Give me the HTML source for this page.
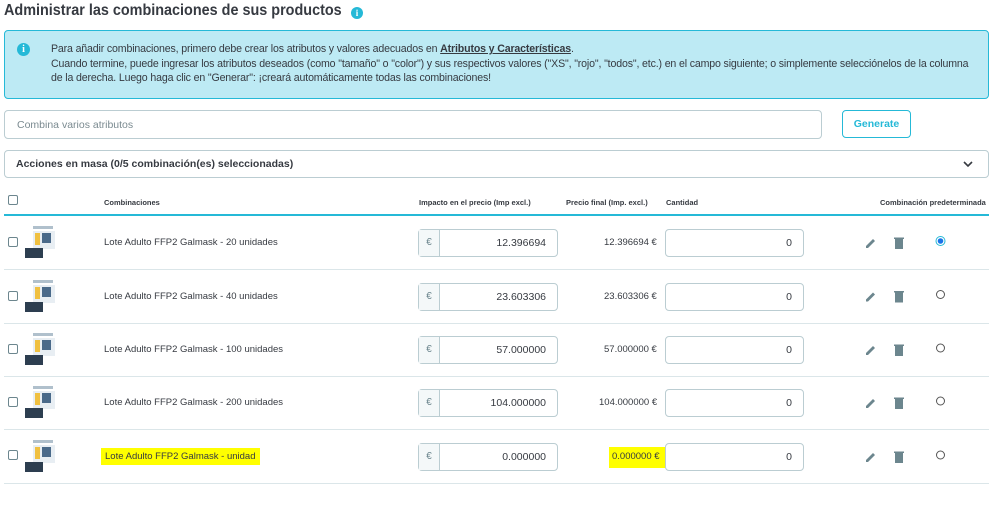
<!DOCTYPE html><html><head><meta charset="utf-8"><style>
*{box-sizing:border-box;margin:0;padding:0}
body{width:1000px;height:521px;background:#fff;font-family:"Liberation Sans",sans-serif;color:#363a41;position:relative;overflow:hidden}
.a{position:absolute}
h2{position:absolute;left:4px;top:2px;font-size:16px;font-weight:bold;color:#363a41;transform:scaleX(0.9);transform-origin:0 0;white-space:nowrap}
.info{left:4px;top:30px;width:985px;height:69px;background:#bdeaf4;border:1px solid #25b9d7;border-radius:4px;font-size:10.6px;line-height:14.5px;color:#363a41;padding:11px 10px 0 46px}
.info div{white-space:nowrap;letter-spacing:-0.15px}
.ic{border-radius:50%;background:#25b9d7;color:#fff;font-weight:bold;text-align:center;font-family:"Liberation Serif",serif}
.inp{border:1px solid #bbcdd2;border-radius:4px;background:#fff}
.th{font-size:7.5px;font-weight:bold;color:#363a41}
.row{position:absolute;left:4px;width:985px;height:54px;border-bottom:1px solid #dbe6e9}
.cb{position:absolute;left:4px;width:10px;height:10px;border:1px solid #6c868e;border-radius:2px;background:#fff}
.t{position:absolute;font-size:9.5px;color:#363a41}
.eur{position:absolute;left:414px;top:13px;width:140px;height:28px;border:1px solid #bbcdd2;border-radius:4px;background:#fff}
.eur span{position:absolute;left:0;top:0;width:21px;height:26px;background:#f4f8f9;border-right:1px solid #bbcdd2;font-size:10px;color:#6c868e;line-height:26px;text-align:center}
.eur b{position:absolute;right:11px;top:0;line-height:26px;font-weight:normal;font-size:10.5px}
.qty{position:absolute;left:661px;top:13px;width:139px;height:28px;border:1px solid #bbcdd2;border-radius:4px;background:#fff;text-align:right;padding-right:11px;line-height:26px;font-size:10.5px}
.img{position:absolute;left:21px;top:8px;width:36px;height:36px}
.hl{background:#ffff00}
</style></head><body>
<h2>Administrar las combinaciones de sus productos</h2>
<div class="a ic" style="left:351px;top:7px;width:12px;height:12px;font-size:9px;line-height:12px">i</div>
<div class="a info"><div>Para añadir combinaciones, primero debe crear los atributos y valores adecuados en <b style="text-decoration:underline">Atributos y Características</b>.</div><div>Cuando termine, puede ingresar los atributos deseados (como "tamaño" o "color") y sus respectivos valores ("XS", "rojo", "todos", etc.) en el campo siguiente; o simplemente selecciónelos de la columna</div><div>de la derecha. Luego haga clic en "Generar": ¡creará automáticamente todas las combinaciones!</div></div>
<div class="a ic" style="left:17px;top:43px;width:13px;height:13px;font-size:10px;line-height:13px">i</div>
<div class="a inp" style="left:4px;top:110px;width:818px;height:29px;font-size:10.5px;color:#7a8a90;padding:8px 12px">Combina varios atributos</div>
<div class="a" style="left:842px;top:110px;width:69px;height:28px;border:1px solid #25b9d7;border-radius:4px;color:#25b9d7;font-weight:bold;font-size:10.5px;text-align:center;line-height:26px">Generate</div>
<div class="a inp" style="left:4px;top:150px;width:985px;height:28px;font-size:10.5px;font-weight:bold;padding:7px 11px;color:#363a41">Acciones en masa (0/5 combinación(es) seleccionadas)</div>
<svg class="a" style="left:962px;top:159px" width="12" height="10"><path d="M2 3l4 4 4-4" stroke="#363a41" stroke-width="1.6" fill="none"/></svg>
<div class="a" style="left:4px;top:192px;width:985px;height:24px;border-bottom:2px solid #25b9d7"></div>
<div class="cb" style="left:8px;top:195px"></div>
<div class="a th" style="left:104px;top:198px">Combinaciones</div>
<div class="a th" style="left:419px;top:198px">Impacto en el precio (Imp excl.)</div>
<div class="a th" style="left:566px;top:198px">Precio final (Imp. excl.)</div>
<div class="a th" style="left:666px;top:198px">Cantidad</div>
<div class="a th" style="left:880px;top:198px">Combinación predeterminada</div>

<div class="row" style="top:216px">
<div class="cb" style="top:21px"></div><div class="img"><svg width="36" height="36"><rect x="8" y="2" width="20" height="3" fill="#b0c0cc"/><rect x="8" y="7" width="22" height="18" fill="#e8eef3"/><rect x="10" y="9" width="5" height="12" fill="#f0c040"/><rect x="17" y="9" width="9" height="10" fill="#4a6a8a"/><rect x="0" y="24" width="18" height="10" fill="#2d3e50"/></svg></div>
<div class="t" style="left:100px;top:21px">Lote Adulto FFP2 Galmask - 20 unidades</div>
<div class="eur"><span>€</span><b>12.396694</b></div>
<div class="t" style="left:600px;top:21px">12.396694 €</div>
<div class="qty">0</div>
</div>
<div class="row" style="top:270px">
<div class="cb" style="top:21px"></div><div class="img"><svg width="36" height="36"><rect x="8" y="2" width="20" height="3" fill="#b0c0cc"/><rect x="8" y="7" width="22" height="18" fill="#e8eef3"/><rect x="10" y="9" width="5" height="12" fill="#f0c040"/><rect x="17" y="9" width="9" height="10" fill="#4a6a8a"/><rect x="0" y="24" width="18" height="10" fill="#2d3e50"/></svg></div>
<div class="t" style="left:100px;top:21px">Lote Adulto FFP2 Galmask - 40 unidades</div>
<div class="eur"><span>€</span><b>23.603306</b></div>
<div class="t" style="left:600px;top:21px">23.603306 €</div>
<div class="qty">0</div>
</div>
<div class="row" style="top:323px">
<div class="cb" style="top:21px"></div><div class="img"><svg width="36" height="36"><rect x="8" y="2" width="20" height="3" fill="#b0c0cc"/><rect x="8" y="7" width="22" height="18" fill="#e8eef3"/><rect x="10" y="9" width="5" height="12" fill="#f0c040"/><rect x="17" y="9" width="9" height="10" fill="#4a6a8a"/><rect x="0" y="24" width="18" height="10" fill="#2d3e50"/></svg></div>
<div class="t" style="left:100px;top:21px">Lote Adulto FFP2 Galmask - 100 unidades</div>
<div class="eur"><span>€</span><b>57.000000</b></div>
<div class="t" style="left:600px;top:21px">57.000000 €</div>
<div class="qty">0</div>
</div>
<div class="row" style="top:376px">
<div class="cb" style="top:21px"></div><div class="img"><svg width="36" height="36"><rect x="8" y="2" width="20" height="3" fill="#b0c0cc"/><rect x="8" y="7" width="22" height="18" fill="#e8eef3"/><rect x="10" y="9" width="5" height="12" fill="#f0c040"/><rect x="17" y="9" width="9" height="10" fill="#4a6a8a"/><rect x="0" y="24" width="18" height="10" fill="#2d3e50"/></svg></div>
<div class="t" style="left:100px;top:21px">Lote Adulto FFP2 Galmask - 200 unidades</div>
<div class="eur"><span>€</span><b>104.000000</b></div>
<div class="t" style="left:595px;top:21px">104.000000 €</div>
<div class="qty">0</div>
</div>
<div class="row" style="top:430px">
<div class="cb" style="top:20px"></div><div class="img"><svg width="36" height="36"><rect x="8" y="2" width="20" height="3" fill="#b0c0cc"/><rect x="8" y="7" width="22" height="18" fill="#e8eef3"/><rect x="10" y="9" width="5" height="12" fill="#f0c040"/><rect x="17" y="9" width="9" height="10" fill="#4a6a8a"/><rect x="0" y="24" width="18" height="10" fill="#2d3e50"/></svg></div>
<div class="t hl" style="left:97px;top:18px;padding:3px 4px">Lote Adulto FFP2 Galmask - unidad</div>
<div class="eur"><span>€</span><b>0.000000</b></div>
<div class="t hl" style="left:605px;top:17px;padding:4px 12px 6px 3px">0.000000 €</div>
<div class="qty">0</div>
</div>

<svg class="a" style="left:864px;top:236px" width="220" height="240">
<g id="ac">
<path d="M2 10l7-7 2 2-7 7H2z" fill="#6c868e"/>
<rect x="31" y="3" width="8" height="10" fill="#6c868e"/><rect x="30" y="1.5" width="10" height="1.5" fill="#6c868e"/>
</g>
<use href="#ac" y="53.5"/><use href="#ac" y="107"/><use href="#ac" y="160"/><use href="#ac" y="214"/>
<circle cx="76.5" cy="5" r="4.5" fill="#fff" stroke="#25b9d7"/><circle cx="76.5" cy="5" r="2.8" fill="#1a73e8"/>
<g fill="#fff" stroke="#555"><circle cx="76.5" cy="58.5" r="4"/><circle cx="76.5" cy="112" r="4"/><circle cx="76.5" cy="165" r="4"/><circle cx="76.5" cy="219" r="4"/></g>
</svg>
</body></html>
